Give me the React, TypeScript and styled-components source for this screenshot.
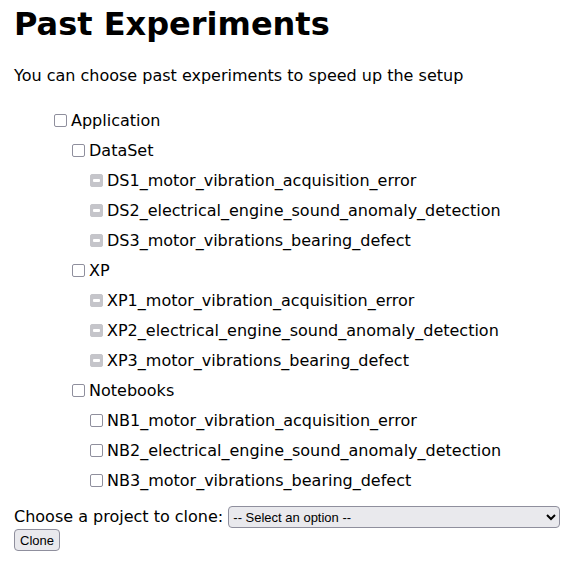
import React, { useEffect, useRef } from "react";
import styled, { createGlobalStyle } from "styled-components";

const GlobalStyle = createGlobalStyle`
  body {
    margin: 0;
    background: #ffffff;
    color: #000000;
    font-family: "DejaVu Sans", sans-serif;
  }
`;

const Page = styled.div`
  padding: 6px 8px 6px 14px;
  font-size: 16px;
`;

const Title = styled.h1`
  font-size: 32px;
  font-weight: bold;
  margin: 0 0 23px;
  line-height: 37px;
`;

const Intro = styled.p`
  margin: 0 0 20px;
  line-height: 19px;
`;

const TreeList = styled.ul<{ $indent: number }>`
  list-style: none;
  margin: 0;
  padding-left: ${(p) => p.$indent}px;
`;

const Row = styled.label`
  display: flex;
  align-items: center;
  height: 30px;
  white-space: nowrap;
`;

const Check = styled.input`
  appearance: none;
  box-sizing: border-box;
  width: 13px;
  height: 13px;
  margin: 0 4px 0 4px;
  border: 1px solid #8f8f9d;
  border-radius: 2px;
  background: #ffffff;
  position: relative;

  &:indeterminate:disabled {
    border-color: #c5c5ca;
    background: #c5c5ca;
  }
  &:indeterminate:disabled::after {
    content: "";
    position: absolute;
    left: 2px;
    right: 2px;
    top: 4px;
    height: 3px;
    background: #ffffff;
    border-radius: 1px;
  }
`;

const CloneBar = styled.div`
  margin-top: 11px;
  line-height: 22px;
  white-space: nowrap;
`;

const ProjectSelect = styled.select`
  box-sizing: border-box;
  width: 332px;
  height: 22px;
  margin: 0;
  vertical-align: top;
  background: #e9e9ed;
  border: 1px solid #8f8f9d;
  border-radius: 4px;
  color: #000000;
  font-size: 13px;
`;

const CloneButton = styled.button`
  display: block;
  box-sizing: border-box;
  height: 22px;
  margin: 1px 0 0;
  padding: 0 5px;
  background: #e9e9ed;
  border: 1px solid #8f8f9d;
  border-radius: 4px;
  color: #000000;
  font-size: 13px;
`;

type Node = { label: string; locked?: boolean; children?: Node[] };

const base = [
  "motor_vibration_acquisition_error",
  "electrical_engine_sound_anomaly_detection",
  "motor_vibrations_bearing_defect",
];

const tree: Node = {
  label: "Application",
  children: [
    { label: "DataSet", children: base.map((b, i) => ({ label: `DS${i + 1}_${b}`, locked: true })) },
    { label: "XP", children: base.map((b, i) => ({ label: `XP${i + 1}_${b}`, locked: true })) },
    { label: "Notebooks", children: base.map((b, i) => ({ label: `NB${i + 1}_${b}` })) },
  ],
};

const TreeBox = ({ locked }: { locked?: boolean }) => {
  const ref = useRef<HTMLInputElement>(null);
  useEffect(() => {
    if (ref.current && locked) ref.current.indeterminate = true;
  }, [locked]);
  return <Check type="checkbox" ref={ref} disabled={locked} />;
};

const TreeItem = ({ node }: { node: Node }) => (
  <li>
    <Row>
      <TreeBox locked={node.locked} />
      {node.label}
    </Row>
    {node.children && (
      <TreeList $indent={18}>
        {node.children.map((c) => (
          <TreeItem key={c.label} node={c} />
        ))}
      </TreeList>
    )}
  </li>
);

const App = () => {
  return (
    <Page>
      <GlobalStyle />
      <Title>Past Experiments</Title>
      <Intro>You can choose past experiments to speed up the setup</Intro>
      <TreeList $indent={36}>
        <TreeItem node={tree} />
      </TreeList>
      <CloneBar>
        Choose a project to clone:{" "}
        <ProjectSelect defaultValue="">
          <option value="">-- Select an option --</option>
        </ProjectSelect>
        <CloneButton>Clone</CloneButton>
      </CloneBar>
    </Page>
  );
};

export default App;
